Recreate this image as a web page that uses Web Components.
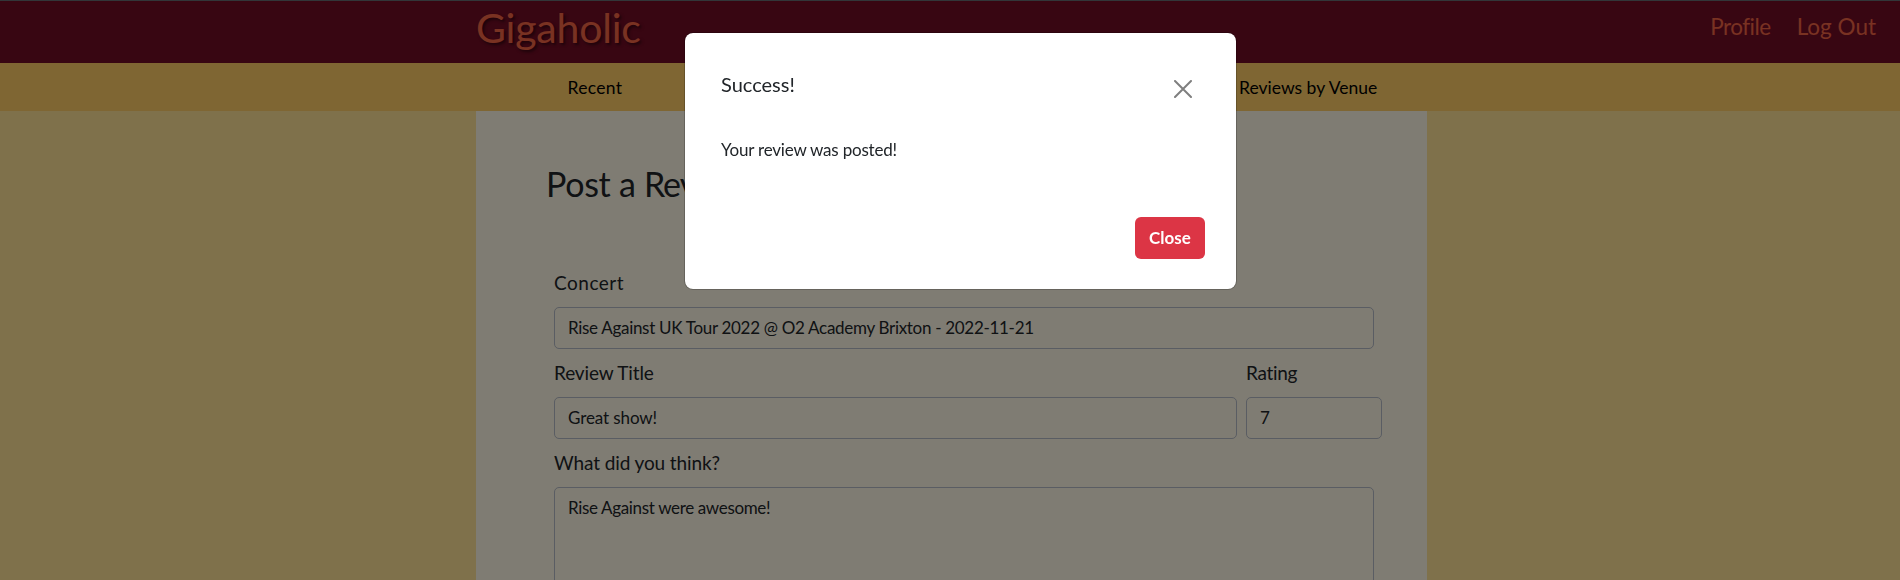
<!DOCTYPE html>
<html lang="en">
<head>
<meta charset="utf-8">
<title>Gigaholic</title>
<style>
html,body{margin:0;height:580px;overflow:hidden}
body{font-family:Lato,"Open Sans",sans-serif;color:#212529;background:#ffe396}
</style>
</head>
<body>
<giga-app></giga-app>
<script>
const define=(name,css,html)=>customElements.define(name,class extends HTMLElement{
  constructor(){super();const t=document.createElement('template');t.innerHTML='<style>'+css+'</style>'+html;
    this.attachShadow({mode:'open'}).append(t.content.cloneNode(true));}
});
define('giga-header',`:host{display:grid;grid-template-columns:1fr 951px 1fr;box-sizing:border-box;height:63px;border-top:1px solid #646c72;background:#700c24;color:#f26444;margin-right:-3px}
.logo{grid-column:2;font-size:41px;line-height:50px;padding-top:2px;white-space:nowrap;letter-spacing:-.2px;text-shadow:2px 2px 3px rgba(0,0,0,.5)}
nav{display:flex;justify-content:flex-end;gap:26px;padding:12px 27px 0 0;font-size:22.5px;line-height:28px;white-space:nowrap}`,
`<div class="logo">Gigaholic</div><nav><slot></slot></nav>`);
define('giga-nav',`:host{display:grid;grid-template-columns:repeat(4,237.75px);justify-content:center;margin-right:-3px;height:48px;background:#ffcc66;color:#000;font-size:17.5px;line-height:50px;text-align:center;white-space:nowrap}
::slotted(:last-child){grid-column:4}`,`<slot></slot>`);
define('giga-field',`:host{display:block;margin-bottom:12px}
label{display:block;height:36px;font-size:19px;line-height:24px;white-space:nowrap}
.box{box-sizing:border-box;height:var(--h,42px);border:1px solid #b4bac6;border-radius:5px;padding:8px 13px;font-size:17px;line-height:24px;white-space:nowrap}`,
`<label><slot name="label"></slot></label><div class="box"><slot></slot></div>`);
define('giga-form',`:host{display:block;box-sizing:border-box;overflow:hidden;width:951px;height:469px;margin-left:476px;padding:53px 0 0 70px;background:#fef8e6}
h1{margin:0 0 67px;font-weight:400;font-size:34px;line-height:40px;letter-spacing:-.3px}
h1 span{letter-spacing:-1px}
.fields{margin-left:8px;width:820px}
.row{display:grid;grid-template-columns:683px 136px;gap:9px}
.area{--h:140px}`,
`<h1>Post a <span>Review</span></h1><div class="fields">
<giga-field><span slot="label" style="letter-spacing:.5px">Concert</span><span style="letter-spacing:-.3px">Rise Against UK Tour 2022 @ O2 Academy Brixton - 2022-11-21</span></giga-field>
<div class="row"><giga-field><span slot="label" style="letter-spacing:-.13px">Review Title</span><span style="letter-spacing:-.1px">Great show!</span></giga-field><giga-field><span slot="label" style="letter-spacing:-.3px">Rating</span><span>7</span></giga-field></div>
<giga-field class="area"><span slot="label" style="letter-spacing:-.1px">What did you think?</span><span style="letter-spacing:-.34px">Rise Against were awesome!</span></giga-field></div>`);
define('giga-modal',`:host{position:fixed;inset:0;background:rgba(0,0,0,.5);display:flex;align-items:flex-start}
.dialog{box-sizing:border-box;width:553px;height:258px;margin:32px 0 0 684px;border:1px solid rgba(0,0,0,.2);border-radius:9px;background:#fff;background-clip:padding-box;padding:39px 31px 30px 36px;display:flex;flex-direction:column}
.head{display:flex;justify-content:space-between;height:66px;font-size:20px;line-height:24px}
svg{width:18px;height:18px;margin:8px 13px 0 0}
.body{font-size:17px;line-height:24px;letter-spacing:-.2px}
.foot{display:flex;justify-content:flex-end;margin-top:auto}
button{width:70px;height:42px;border:0;border-radius:6px;background:#dc3545;color:#fff;font:bold 17px/24px Lato,sans-serif;padding:0}`,
`<div class="dialog"><div class="head"><span>Success!</span><svg viewBox="0 0 18 18"><path d="M1 1 17 17M17 1 1 17" fill="none" stroke="#7f7f7f" stroke-width="2" stroke-linecap="round"/></svg></div>
<div class="body">Your review was posted!</div><div class="foot"><button>Close</button></div></div>`);
define('giga-app',`:host{display:block}`,`<giga-header><span style="letter-spacing:-.5px">Profile</span><span>Log Out</span></giga-header><giga-nav><span style="letter-spacing:.3px">Recent</span><span>Reviews by Venue</span></giga-nav><giga-form></giga-form><giga-modal></giga-modal>`);
</script>
</body>
</html>
